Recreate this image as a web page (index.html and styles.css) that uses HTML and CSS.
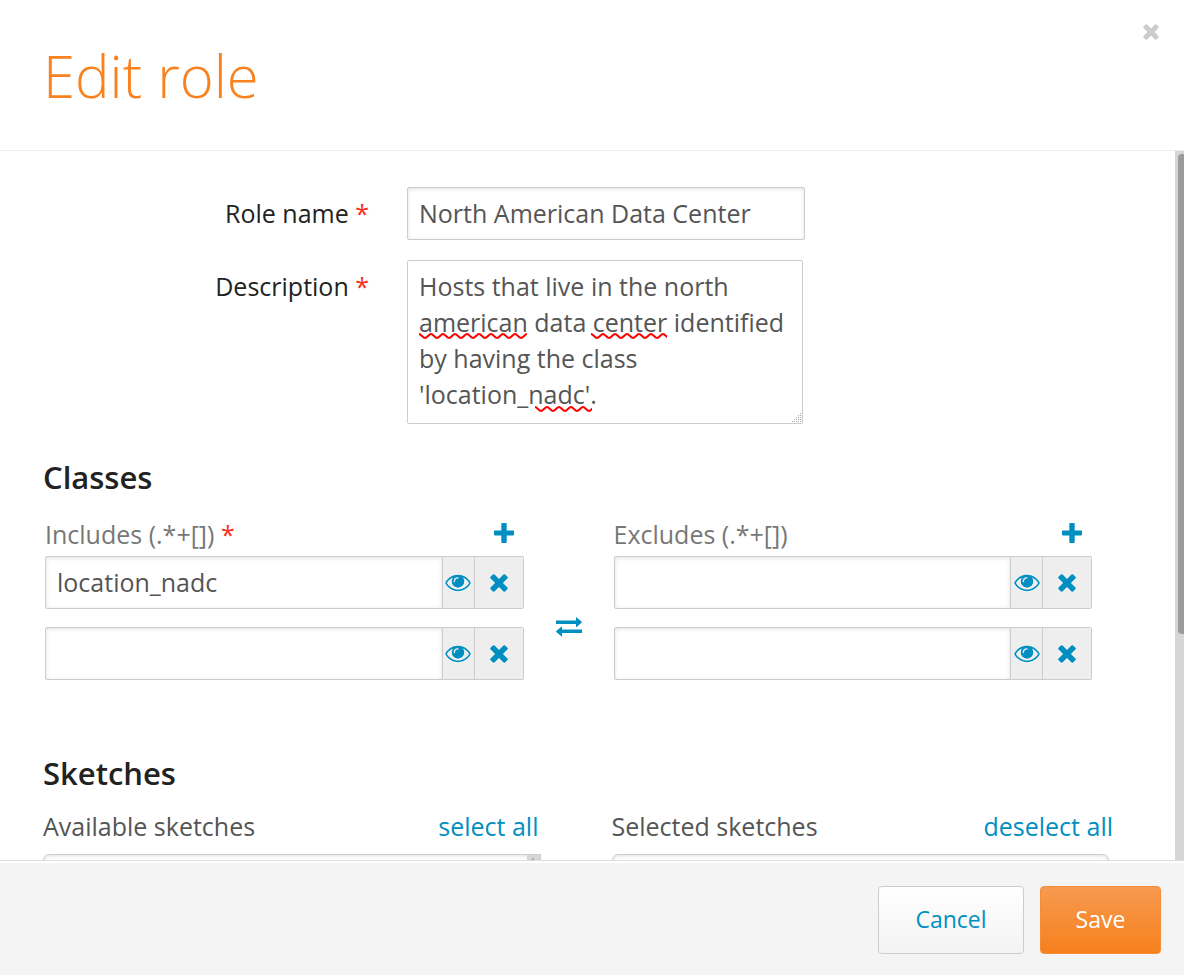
FILE: index.html
```html
<!DOCTYPE html>
<html lang="en">
<head>
<meta charset="utf-8">
<meta name="viewport" content="width=device-width, initial-scale=1">
<title>Edit role</title>
<link rel="stylesheet" href="styles.css">
</head>
<body>
<svg class="sprite" aria-hidden="true">
  <symbol id="cross" viewBox="0 0 18 18"><g transform="rotate(45 9 9)"><rect x="-1.300" y="6.200" width="20.600" height="5.600" rx="1.200"/><rect x="6.200" y="-1.300" width="5.600" height="20.600" rx="1.200"/></g></symbol>
  <symbol id="plus" viewBox="0 0 20 20"><path d="M8.300 0h3.400q1 0 1 1v6.500H19q1 0 1 1v3q0 1-1 1h-6.300V19q0 1-1 1H8.300q-1 0-1-1v-6.500H1q-1 0-1-1v-3q0-1 1-1h6.300V1q0-1 1-1z"/></symbol>
  <symbol id="eye" viewBox="0 0 26 18"><path fill-rule="evenodd" d="M13 .8c5.500 0 10 3 12.500 7.400q.4.800 0 1.600C23 14.200 18.500 17.200 13 17.200S3 14.200.5 9.800q-.4-.8 0-1.600C3 3.800 7.500.8 13 .8zM8.200 3.400C5.500 4.400 3.300 6.400 1.900 9c2.400 4 6.400 6.500 11.100 6.500S21.700 13 24.100 9c-1.400-2.600-3.600-4.600-6.300-5.600A6.200 6.200 0 1 1 8.200 3.400z"/><circle cx="13" cy="7.500" r="6"/><path class="eye-glint" d="M9.300 7.600c0-2.200 1.500-3.700 3.700-3.700" /></symbol>
  <symbol id="swap" viewBox="0 0 26 20"><path d="M0 3.500h20V.8q0-.8.7-.3l5 4.300q.5.400 0 .8l-5 4.300q-.7.500-.7-.3V7H0zM26 16H6v2.900q0 .8-.7.300l-5-4.300q-.5-.4 0-.8l5-4.300q.7-.5.7.3v2.400h20z"/></symbol>
  <pattern id="wave" width="12" height="6" patternUnits="userSpaceOnUse"><path d="M0 1c2 0 4 4 6 4s4-4 6-4" fill="none" stroke="#f00" stroke-width="2"/></pattern>
</svg>
<main class="dialog">
  <header class="dialog-header">
    <h1 class="title">Edit role</h1>
    <button class="icon-button close" type="button" aria-label="Close"><svg><use href="#cross"/></svg></button>
  </header>
  <div class="dialog-body">
    <form class="content" id="role-form">
      <div class="field">
        <label class="field-label" for="name">Role name <span class="required">*</span></label>
        <input class="text-box name-box" id="name" type="text" value="North American Data Center">
      </div>
      <div class="field">
        <label class="field-label" for="description">Description <span class="required">*</span></label>
        <div class="description-wrap">
          <textarea class="text-box description-box" id="description">Hosts that live in the north
american data center identified
by having the class
'location_nadc'.</textarea>
          <svg class="squiggle squiggle-american"><rect width="100%" height="6" fill="url(#wave)"/></svg>
          <svg class="squiggle squiggle-center"><rect width="100%" height="6" fill="url(#wave)"/></svg>
          <svg class="squiggle squiggle-nadc"><rect width="100%" height="6" fill="url(#wave)"/></svg>
          <svg class="grip" viewBox="0 0 10 10"><path d="M8 0h1v1H8zM6 2h1v1H6zM8 2h1v1H8zM4 4h1v1H4zM6 4h1v1H6zM8 4h1v1H8zM2 6h1v1H2zM4 6h1v1H4zM6 6h1v1H6zM8 6h1v1H8zM0 8h1v1H0zM2 8h1v1H2zM4 8h1v1H4zM6 8h1v1H6zM8 8h1v1H8z"/></svg>
        </div>
      </div>
      <h2 class="section-title">Classes</h2>
      <div class="classes">
        <div class="class-column">
          <div class="class-header"><label for="include-1">Includes (.*+[]) <span class="required">*</span></label><button class="icon-button add" type="button" aria-label="Add include"><svg><use href="#plus"/></svg></button></div>
          <div class="class-row"><input class="text-box class-box" id="include-1" type="text" value="location_nadc"><button class="addon view" type="button" aria-label="View hosts"><svg><use href="#eye"/></svg></button><button class="addon remove" type="button" aria-label="Remove"><svg><use href="#cross"/></svg></button></div>
          <div class="class-row"><input class="text-box class-box" type="text" aria-label="Include 2"><button class="addon view" type="button" aria-label="View hosts"><svg><use href="#eye"/></svg></button><button class="addon remove" type="button" aria-label="Remove"><svg><use href="#cross"/></svg></button></div>
        </div>
        <button class="icon-button swap" type="button" aria-label="Swap includes and excludes"><svg><use href="#swap"/></svg></button>
        <div class="class-column">
          <div class="class-header"><label for="exclude-1">Excludes (.*+[])</label><button class="icon-button add" type="button" aria-label="Add exclude"><svg><use href="#plus"/></svg></button></div>
          <div class="class-row"><input class="text-box class-box" id="exclude-1" type="text"><button class="addon view" type="button" aria-label="View hosts"><svg><use href="#eye"/></svg></button><button class="addon remove" type="button" aria-label="Remove"><svg><use href="#cross"/></svg></button></div>
          <div class="class-row"><input class="text-box class-box" type="text" aria-label="Exclude 2"><button class="addon view" type="button" aria-label="View hosts"><svg><use href="#eye"/></svg></button><button class="addon remove" type="button" aria-label="Remove"><svg><use href="#cross"/></svg></button></div>
        </div>
      </div>
      <h2 class="section-title sketches-title">Sketches</h2>
      <div class="sketches">
        <section>
          <div class="sketch-header"><span>Available sketches</span><a class="link" href="#available">select all</a></div>
          <div class="sketch-list has-scroll" id="available"><div class="list-track"><svg viewBox="0 0 6 4"><path d="M3 0l3 4H0z"/></svg></div></div>
        </section>
        <section>
          <div class="sketch-header sketch-header-wide"><span>Selected sketches</span><a class="link" href="#selected">deselect all</a></div>
          <div class="sketch-list" id="selected"></div>
        </section>
      </div>
    </form>
    <div class="scroll-track"><div class="scroll-thumb"></div></div>
  </div>
  <footer class="dialog-footer">
    <button class="button cancel" type="button">Cancel</button>
    <button class="button save" type="submit" form="role-form">Save</button>
  </footer>
</main>
</body>
</html>
```
FILE: styles.css
```css
* { box-sizing: border-box; }
body { margin: 0; background: #fff; color: #222; font: 500 25px/36px "Open Sans", Lato, sans-serif; }
button, input, textarea { margin: 0; font: inherit; }
svg { display: block; fill: currentColor; }
.sprite { position: absolute; width: 0; height: 0; }

.dialog { display: flex; flex-direction: column; height: 100vh; }
.dialog-header { display: flex; justify-content: space-between; flex: none; height: 151px; padding: 23px 25px 0 43px; border-bottom: 1px solid #ececec; }
.title { margin: 18px 0 0; color: #f8821f; font-size: 58px; font-weight: 300; line-height: 70px; }
.icon-button { display: flex; align-items: center; justify-content: center; padding: 0; border: 0; background: none; color: #008fc0; cursor: pointer; }
.close { width: 17px; height: 17px; color: #ccc; }
.close svg { width: 16px; height: 16px; }

.dialog-body { display: flex; flex: 1; min-height: 0; overflow: hidden; }
.content { flex: 1; min-width: 0; padding-top: 36px; }
.scroll-track { flex: none; width: 9px; padding: 3px 0 0 3px; background: #d6d6d6; overflow: hidden; }
.scroll-thumb { width: 9px; height: 68%; border-radius: 4px; background: #9c9c9e; }

.field { display: grid; grid-template-columns: 369fr 768fr; column-gap: 38px; margin-bottom: 20px; }
.field-label { padding-top: 8px; text-align: right; }
.required { color: #f62e22; }
.text-box { display: block; width: 100%; height: 53px; padding: 0 11px 2px; border: 1px solid #ccc; border-radius: 2px; outline: 0; background: #fff; color: #555; box-shadow: inset 0 1px 4px rgba(0, 0, 0, .12); }
.name-box { max-width: 398px; }
.description-wrap { position: relative; max-width: 396px; }
.description-box { height: 164px; padding: 7px 11px; resize: none; overflow: hidden; white-space: pre; box-shadow: none; }
.squiggle { position: absolute; height: 6px; pointer-events: none; }
.squiggle-american { left: 12px; top: 73px; width: 108px; }
.squiggle-center { left: 184px; top: 73px; width: 76px; }
.squiggle-nadc { left: 128px; top: 146px; width: 57px; }
.grip { position: absolute; right: 1px; bottom: 1px; width: 10px; height: 10px; fill: #aaa; pointer-events: none; }

.section-title { margin: 33px 0 0 43px; font-size: 31px; font-weight: 600; line-height: 40px; }
.classes { display: grid; grid-template-columns: 1fr 90px 1fr; margin-top: 16px; padding: 0 83px 0 45px; }
.class-header { display: flex; align-items: center; justify-content: space-between; height: 41px; margin-bottom: 2px; padding-right: 10px; color: #777; }
.add { margin-bottom: 2px; }
.add svg { width: 20px; height: 20px; }
.class-row { display: flex; margin-bottom: 18px; }
.class-box { flex: 1; min-width: 0; border-radius: 2px 0 0 2px; }
.addon { display: flex; flex: none; align-items: center; justify-content: center; height: 53px; padding: 0; border: 1px solid #ccc; border-left: 0; background: #eee; color: #008fc0; cursor: pointer; }
.addon svg { filter: drop-shadow(0 1px 0 #fff); }
.view { width: 32px; }
.view svg { width: 26px; height: 18px; }
.remove { width: 49px; border-radius: 0 2px 2px 0; }
.remove svg { width: 18px; height: 18px; }
.eye-glint { fill: none; stroke: #eee; stroke-width: 1.400; stroke-linecap: round; }
.swap { align-self: center; margin-top: 43px; }
.swap svg { width: 26px; height: 20px; }

.sketches-title { margin-top: 55px; }
.sketches { display: grid; grid-template-columns: 1fr 1fr; column-gap: 71px; margin-top: 12px; padding: 0 66px 0 43px; color: #555; }
.sketch-header { display: flex; align-items: center; justify-content: space-between; height: 42px; margin-bottom: 7px; padding-right: 2px; }
.sketch-header-wide { margin-right: -4px; padding-right: 0; }
.link { color: #008fc0; text-decoration: none; }
.sketch-list { height: 200px; border: 1px solid #ccc; border-radius: 6px; box-shadow: inset 0 1px 4px rgba(0, 0, 0, .12); }
.has-scroll { display: flex; justify-content: flex-end; border-radius: 6px 0 0 6px; }
.list-track { width: 13px; padding: 3px 0 0 3px; background: #d6d6d6; }
.list-track svg { width: 6px; height: 4px; fill: #999; }

.dialog-footer { display: flex; flex: none; align-items: center; justify-content: flex-end; gap: 16px; height: 115px; padding: 4px 23px 0; border-top: 1px solid #ddd; background: #f4f4f4; box-shadow: inset 0 2px 0 #fff; }
.button { height: 68px; padding: 0 0 2px; border: 1px solid #ccc; border-radius: 4px; font-size: 23px; cursor: pointer; }
.cancel { width: 146px; background: linear-gradient(#fff, #f3f3f3); color: #008fc0; }
.save { width: 121px; border-color: #f58d37; background: linear-gradient(#f79a50, #f6801c); color: #fff; }
```
